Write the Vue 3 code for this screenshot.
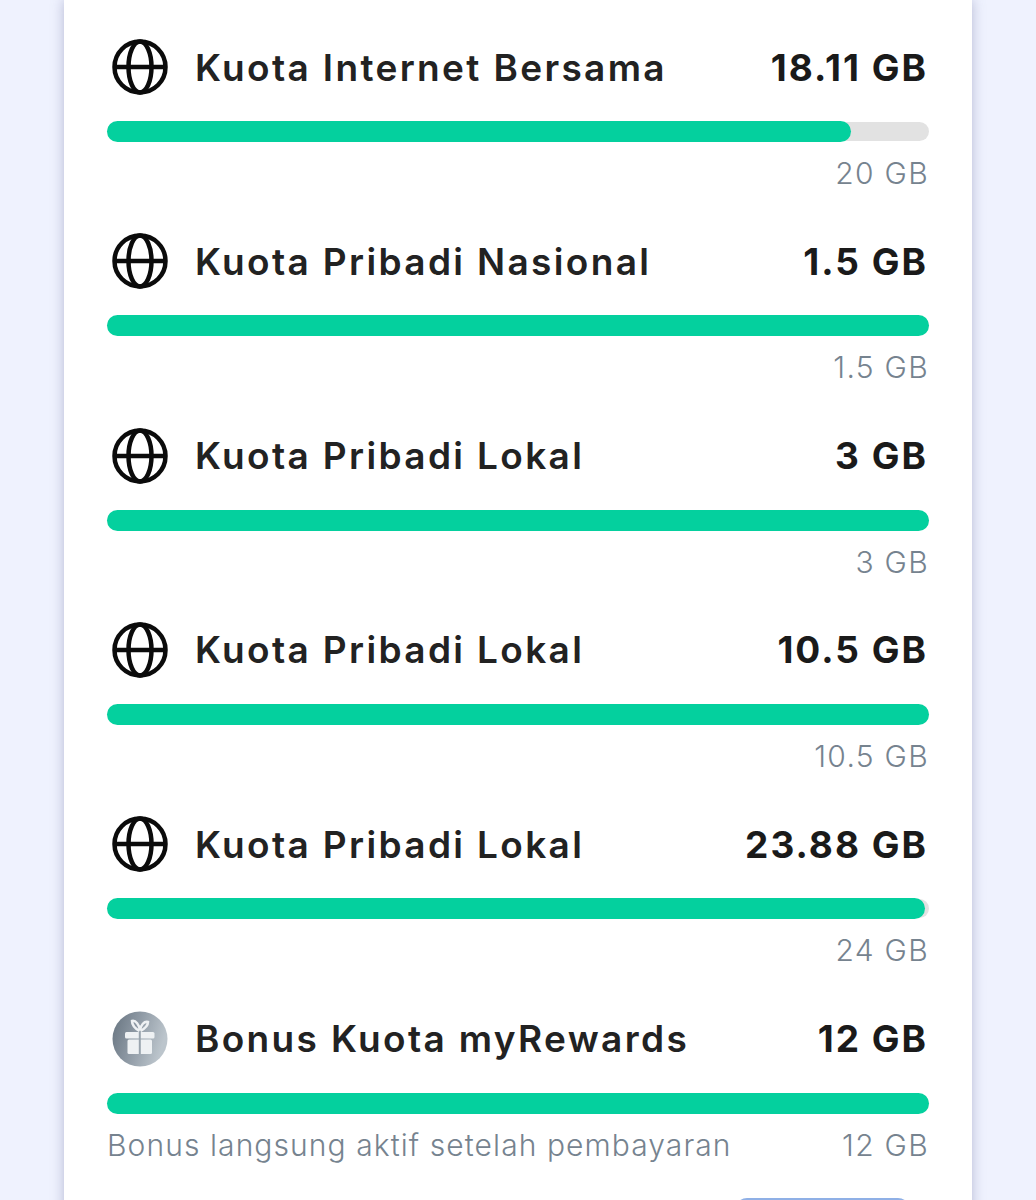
<template>
  <div class="page">
    <div class="card">
      <div v-for="(item, i) in items" :key="i" class="quota">
        <div class="quota-head">
          <span v-if="item.bonus" class="gift">
            <svg xmlns="http://www.w3.org/2000/svg" viewBox="0 0 56 56" width="56" height="56">
              <defs>
                <linearGradient id="giftBg" x1="0" y1="0" x2="1" y2="0.3">
                  <stop offset="0" stop-color="#66737f" />
                  <stop offset="0.5" stop-color="#8f9aa5" />
                  <stop offset="1" stop-color="#bcc5cc" />
                </linearGradient>
              </defs>
              <circle cx="28" cy="28" r="27.5" fill="url(#giftBg)" />
              <path d="M27.5 20 C24 18 20 14 20 10 C24 9 27 14 28 19 C29 14 32 10 36 11 C36 15 32 18 28.5 20" fill="none" stroke="#eef1f3" stroke-width="2.5" />
              <rect x="13" y="21" width="29.5" height="6.5" rx="1.5" fill="#eef1f3" />
              <rect x="15.5" y="28.5" width="24.5" height="14.5" rx="1.5" fill="#eef1f3" />
              <rect x="26.8" y="21" width="2" height="22" fill="#98a3ad" />
            </svg>
          </span>
          <svg v-else class="globe" xmlns="http://www.w3.org/2000/svg" viewBox="0 0 56 56" width="56" height="56" fill="none" stroke="#0b0b0b" stroke-width="4.5">
            <circle cx="28" cy="28" r="25.5" />
            <ellipse cx="28" cy="28" rx="11.5" ry="25.5" />
            <line x1="2" y1="28" x2="54" y2="28" />
          </svg>
          <span class="name">{{ item.name }}</span>
          <span class="amount">{{ item.left }}</span>
        </div>
        <div class="track">
          <div class="fill" :style="{ width: (item.used / item.total) * 100 + '%' }"></div>
        </div>
        <div class="foot">
          <span class="note">{{ item.note }}</span>
          <span class="total">{{ item.totalLabel }}</span>
        </div>
      </div>
      <button class="action"></button>
    </div>
  </div>
</template>

<script setup>
const items = [
  { name: 'Kuota Internet Bersama', left: '18.11 GB', used: 18.11, total: 20, totalLabel: '20 GB' },
  { name: 'Kuota Pribadi Nasional', left: '1.5 GB', used: 1.5, total: 1.5, totalLabel: '1.5 GB' },
  { name: 'Kuota Pribadi Lokal', left: '3 GB', used: 3, total: 3, totalLabel: '3 GB' },
  { name: 'Kuota Pribadi Lokal', left: '10.5 GB', used: 10.5, total: 10.5, totalLabel: '10.5 GB' },
  { name: 'Kuota Pribadi Lokal', left: '23.88 GB', used: 23.88, total: 24, totalLabel: '24 GB' },
  { name: 'Bonus Kuota myRewards', left: '12 GB', used: 12, total: 12, totalLabel: '12 GB', bonus: true, note: 'Bonus langsung aktif setelah pembayaran' }
]
</script>

<style scoped>
.page {
  height: 1200px;
  overflow: hidden;
  background: #eff2fe;
  padding: 0 64px;
  box-sizing: border-box;
  font-family: Inter, "Liberation Sans", sans-serif;
}

.card {
  background: #fff;
  padding: 39px 43px 0 43px;
  box-shadow: 0 0 12px rgba(110, 115, 160, 0.45);
}

.quota {
  height: 194.33px;
}

.quota:last-of-type {
  height: 155px;
}

.quota-head {
  display: flex;
  align-items: center;
  height: 56px;
  padding: 0 1px 0 5px;
}

.globe,
.gift {
  flex: none;
  width: 56px;
  height: 56px;
}

.name {
  flex: 1;
  margin-left: 27px;
  font-size: 37px;
  font-weight: 600;
  letter-spacing: 2.35px;
  color: #222;
}

.amount {
  font-size: 37px;
  font-weight: 700;
  letter-spacing: 2px;
  color: #1a1a1a;
}

.track {
  margin-top: 27px;
  height: 19px;
  border-radius: 10px;
  background: #e2e2e2;
  position: relative;
}

.fill {
  position: absolute;
  top: -1px;
  left: 0;
  height: 21px;
  border-radius: 11px;
  background: #04d09e;
}

.foot {
  display: flex;
  justify-content: space-between;
  margin-top: 11px;
  font-size: 30px;
  font-weight: 300;
  line-height: 42px;
  color: #76838f;
}

.note {
  letter-spacing: 1.08px;
}

.total {
  letter-spacing: 1.3px;
}

.action {
  display: block;
  width: 175px;
  height: 50px;
  margin: 32px 19px 0 auto;
  border: none;
  border-radius: 12px;
  background: #8fb0e6;
}
</style>
